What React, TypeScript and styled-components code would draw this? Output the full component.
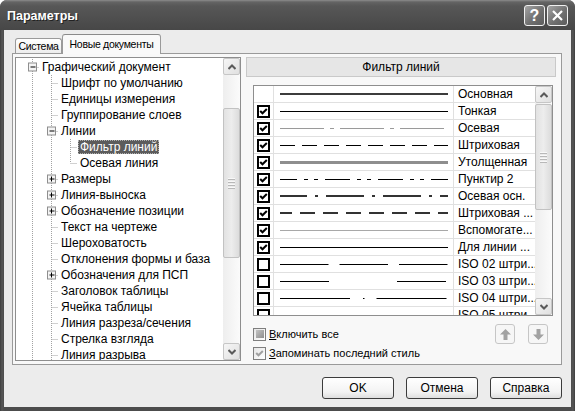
import React from 'react';
import styled, { createGlobalStyle, css } from 'styled-components';

const SANS = "'Liberation Sans', Arial, sans-serif";

const GlobalStyle = createGlobalStyle`
  html, body {
    margin: 0;
    padding: 0;
    background: #ffffff;
  }
  body {
    font-family: ${SANS};
  }
`;

const Window = styled.div`
  width: 575px;
  height: 411px;
  display: flex;
  flex-direction: column;
  background: linear-gradient(90deg, #3e3e3e 0, #575757 2px, #4c4c4c 4px, #4c4c4c 571px, #575757 573px, #3e3e3e 575px);
  border-radius: 7px 7px 0 0;
  overflow: hidden;
`;

const TitleBar = styled.div`
  height: 30px;
  flex: none;
  display: flex;
  align-items: center;
  padding: 0 7px 0 7px;
  box-sizing: border-box;
  background: linear-gradient(#8c8c8c 0, #646464 2px, #575757 6px, #4f4f4f 60%, #474747 100%);
`;

const TitleText = styled.div`
  flex: 1;
  color: #ffffff;
  font: bold 12.5px ${SANS};
  text-shadow: 1px 1px 0 #222222;
  padding-top: 1px;
`;

const CaptionButtons = styled.div`
  display: flex;
  gap: 2px;
  margin-top: 1px;
`;

const CaptionButton = styled.div`
  width: 21px;
  height: 21px;
  box-sizing: border-box;
  border: 1px solid #f0f0f0;
  border-radius: 3px;
  background: linear-gradient(135deg, #a4a4a4, #707070 55%, #5c5c5c);
  display: flex;
  align-items: center;
  justify-content: center;
  color: #ffffff;
  font: bold 16px ${SANS};
`;

const Client = styled.div`
  flex: 1;
  margin: 0 4px 4px;
  background: #ececec;
  display: flex;
  flex-direction: column;
  padding: 4px 9px 0 8px;
`;

const TabRow = styled.div`
  display: flex;
  align-items: flex-end;
  height: 19px;
  padding-left: 3px;
  position: relative;
  z-index: 1;
`;

const Tab = styled.div<{ $active?: boolean; $width: number }>`
  box-sizing: border-box;
  width: ${(p) => p.$width}px;
  height: ${(p) => (p.$active ? 20 : 15)}px;
  margin-bottom: ${(p) => (p.$active ? -1 : 0)}px;
  border: 1px solid #9a9a9a;
  border-bottom: none;
  border-radius: 3px 3px 0 0;
  background: ${(p) => (p.$active ? '#f9f9f9' : 'linear-gradient(#ffffff, #ededed)')};
  font: 10.5px ${SANS};
  letter-spacing: -0.3px;
  color: #000000;
  display: flex;
  align-items: center;
  justify-content: center;
  white-space: nowrap;
  ${(p) =>
    p.$active &&
    css`
      border-top-color: #8a8a8a;
      padding-bottom: 1px;
    `}
`;

const Panel = styled.div`
  height: 312px;
  box-sizing: border-box;
  border: 1px solid #9a9a9a;
  background: #f8f8f8;
  padding: 3px 2px;
  display: flex;
  gap: 5px;
`;

const TreeBox = styled.div`
  width: 226px;
  height: 304px;
  flex: none;
  box-sizing: border-box;
  border: 1px solid #8e8e8e;
  background: #ffffff;
  display: flex;
`;

const TreeBody = styled.div`
  flex: 1;
  overflow: hidden;
  padding-top: 1px;
`;

const TreeRow = styled.div`
  display: flex;
  align-items: center;
  height: 16px;
`;

const TreeLabel = styled.span<{ $selected?: boolean }>`
  padding: 0 2px;
  height: 14px;
  line-height: 14px;
  font: 12px ${SANS};
  color: #000000;
  white-space: nowrap;
  box-sizing: border-box;
  ${(p) =>
    p.$selected &&
    css`
      background: #5c5c5c;
      color: #ffffff;
      outline: 1px dotted #b0b0b0;
      outline-offset: -1px;
    `}
`;

const ScrollBar = styled.div`
  width: 17px;
  flex: none;
  display: flex;
  flex-direction: column;
  background: linear-gradient(90deg, #eeeeee, #fbfbfb);
`;

const ScrollButton = styled.div`
  height: 17px;
  flex: none;
  box-sizing: border-box;
  border: 1px solid #c6c6c6;
  border-radius: 2px;
  background: linear-gradient(135deg, #f6f6f6, #e0e0e0);
  display: flex;
  align-items: center;
  justify-content: center;
`;

const ScrollTrack = styled.div`
  flex: 1;
  display: flex;
  flex-direction: column;
`;

const Thumb = styled.div<{ $top: number; $size: number }>`
  margin-top: ${(p) => p.$top}px;
  height: ${(p) => p.$size}px;
  box-sizing: border-box;
  border: 1px solid #c2c2c2;
  border-radius: 2px;
  background: linear-gradient(90deg, #e2e2e2, #ededed 50%, #dcdcdc);
  display: flex;
  flex-direction: column;
  align-items: center;
  justify-content: center;
  gap: 1px;
`;

const Grip = styled.div`
  width: 7px;
  height: 1px;
  background: #f8f8f8;
  border-bottom: 1px solid #b8b8b8;
`;

const RightPane = styled.div`
  flex: 1;
  display: flex;
  flex-direction: column;
`;

const PaneHeader = styled.div`
  height: 20px;
  margin-right: 3px;
  box-sizing: border-box;
  border: 1px solid #c9c9c9;
  background: #e6e6e6;
  display: flex;
  align-items: center;
  justify-content: center;
  font: 12px ${SANS};
  color: #000000;
`;

const LineList = styled.div`
  margin: 8px 6px 0 7px;
  height: 231px;
  box-sizing: border-box;
  border: 1px solid #8e8e8e;
  background: #ffffff;
  display: flex;
`;

const ListRows = styled.div`
  flex: 1;
  overflow: hidden;
`;

const ListRow = styled.div`
  display: grid;
  grid-template-columns: 20px 180px 1fr;
  height: 17px;
  box-sizing: border-box;
  border-bottom: 1px solid #e0e0e0;
`;

const CheckCell = styled.div`
  border-right: 1px solid #e0e0e0;
  padding: 2px 0 0 3px;
`;

const LineCell = styled.div`
  border-right: 1px solid #e0e0e0;
  padding-left: 6px;
  display: flex;
  align-items: center;
`;

const NameCell = styled.div`
  padding-left: 4px;
  font: 12px ${SANS};
  line-height: 16px;
  color: #000000;
  white-space: nowrap;
  overflow: hidden;
`;

const ListCheck = styled.div`
  width: 13px;
  height: 13px;
  box-sizing: border-box;
  border: 2px solid #000000;
  background: #ffffff;
  display: flex;
  align-items: center;
  justify-content: center;
`;

const Controls = styled.div`
  display: grid;
  grid-template-columns: 1fr auto;
  row-gap: 2px;
  padding: 8px 11px 0 7px;
  align-items: center;
`;

const OptionRow = styled.label<{ $wide?: boolean }>`
  display: flex;
  align-items: center;
  gap: 3px;
  font: 11px ${SANS};
  color: #000000;
  height: 14px;
  ${(p) =>
    p.$wide &&
    css`
      grid-column: 1 / -1;
    `}
`;

const SmallBox = styled.span`
  width: 13px;
  height: 13px;
  box-sizing: border-box;
  border: 1px solid #7e7e7e;
  background: linear-gradient(135deg, #e6e6e6, #ffffff);
  display: flex;
  align-items: center;
  justify-content: center;
`;

const MixedMark = styled.span`
  width: 8px;
  height: 8px;
  background: linear-gradient(135deg, #c4c4c4, #8e8e8e);
`;

const ArrowButtons = styled.div`
  display: flex;
  gap: 13px;
`;

const ArrowButton = styled.div`
  width: 20px;
  height: 20px;
  box-sizing: border-box;
  border: 1px solid #c6c6c6;
  border-radius: 3px;
  background: #f6f6f6;
  display: flex;
  align-items: center;
  justify-content: center;
`;

const Footer = styled.div`
  display: flex;
  justify-content: flex-end;
  gap: 12px;
  margin-top: 12px;
`;

const DialogButton = styled.button`
  width: 72px;
  height: 22px;
  padding: 0;
  box-sizing: border-box;
  border: 1px solid #3c3c3c;
  border-radius: 3px;
  background: linear-gradient(#ffffff, #f3f3f3 70%, #dedede);
  font: 12px ${SANS};
  color: #000000;
`;

type TreeNode = {
  label: string;
  level: number;
  toggle?: '+' | '-';
  last?: boolean;
  selected?: boolean;
};

const treeNodes: TreeNode[] = [
  { label: 'Графический документ', level: 0, toggle: '-' },
  { label: 'Шрифт по умолчанию', level: 1 },
  { label: 'Единицы измерения', level: 1 },
  { label: 'Группирование слоев', level: 1 },
  { label: 'Линии', level: 1, toggle: '-' },
  { label: 'Фильтр линий', level: 2, selected: true },
  { label: 'Осевая линия', level: 2, last: true },
  { label: 'Размеры', level: 1, toggle: '+' },
  { label: 'Линия-выноска', level: 1, toggle: '+' },
  { label: 'Обозначение позиции', level: 1, toggle: '+' },
  { label: 'Текст на чертеже', level: 1 },
  { label: 'Шероховатость', level: 1 },
  { label: 'Отклонения формы и база', level: 1 },
  { label: 'Обозначения для ПСП', level: 1, toggle: '+' },
  { label: 'Заголовок таблицы', level: 1 },
  { label: 'Ячейка таблицы', level: 1 },
  { label: 'Линия разреза/сечения', level: 1 },
  { label: 'Стрелка взгляда', level: 1 },
  { label: 'Линия разрыва', level: 1 },
];

type LineStyle = {
  name: string;
  check: boolean | null;
  width: number;
  color: string;
  dash?: string;
  offset?: number;
};

const lineStyles: LineStyle[] = [
  { name: 'Основная', check: null, width: 2, color: '#3c3c3c' },
  { name: 'Тонкая', check: true, width: 1, color: '#000000' },
  { name: 'Осевая', check: true, width: 1, color: '#9a9a9a', dash: '44 6 4 6' },
  { name: 'Штриховая', check: true, width: 1, color: '#000000', dash: '15 7' },
  { name: 'Утолщенная', check: true, width: 3, color: '#8e8e8e' },
  { name: 'Пунктир 2', check: true, width: 1, color: '#000000', dash: '25 7 4 6 4 7', offset: 8 },
  { name: 'Осевая осн.', check: true, width: 2, color: '#333333', dash: '38 8 3 8', offset: 11 },
  { name: 'Штриховая ...', check: true, width: 2, color: '#333333', dash: '15 8', offset: 3 },
  { name: 'Вспомогате...', check: true, width: 1, color: '#a8a8a8' },
  { name: 'Для линии ...', check: true, width: 1, color: '#000000' },
  { name: 'ISO 02 штри...', check: false, width: 1, color: '#000000', dash: '48.5 11' },
  { name: 'ISO 03 штри...', check: false, width: 1, color: '#000000', dash: '49 68' },
  { name: 'ISO 04 штри...', check: false, width: 1, color: '#000000', dash: '70 13 1.5 12' },
  { name: 'ISO 05 штри...', check: false, width: 1, color: '#000000', dash: '70 10 1.5 5 1.5 10' },
];

const Chevron: React.FC<{ down?: boolean }> = ({ down }) => (
  <svg width="8" height="6" viewBox="0 0 8 6">
    <polyline
      points={down ? '0.5,1 4,4.5 7.5,1' : '0.5,5 4,1.5 7.5,5'}
      fill="none"
      stroke="#5a5a5a"
      strokeWidth="2"
    />
  </svg>
);

const VScroll: React.FC<{ top: number; size: number }> = ({ top, size }) => (
  <ScrollBar>
    <ScrollButton>
      <Chevron />
    </ScrollButton>
    <ScrollTrack>
      <Thumb $top={top} $size={size}>
        <Grip />
        <Grip />
        <Grip />
        <Grip />
      </Thumb>
    </ScrollTrack>
    <ScrollButton>
      <Chevron down />
    </ScrollButton>
  </ScrollBar>
);

const TreeGuides: React.FC<{ node: TreeNode }> = ({ node }) => {
  const width = 24 + 19 * node.level;
  const colX = (c: number) => 16 + 19 * c + 0.5;
  const own = colX(node.level);
  const ancestors = Array.from({ length: node.level }, (_, i) => i);
  return (
    <svg width={width} height="16" style={{ flex: 'none' }}>
      <g stroke="#a2a2a2" strokeWidth="1" strokeDasharray="1 1" fill="none">
        {ancestors.map((c) => (
          <line key={c} x1={colX(c)} y1="0" x2={colX(c)} y2="16" />
        ))}
        <line x1={own} y1="0" x2={own} y2={node.last ? 8 : 16} />
        <line x1={own} y1="8.5" x2={width - 1} y2="8.5" />
      </g>
      {node.toggle && (
        <g>
          <rect x={own - 4} y="4" width="8" height="8" fill="#f4f4f4" stroke="#8e8e8e" />
          <line x1={own - 2} y1="8" x2={own + 3} y2="8" stroke="#000" />
          {node.toggle === '+' && <line x1={own} y1="5.5" x2={own} y2="10.5" stroke="#000" />}
        </g>
      )}
    </svg>
  );
};

const LinePreview: React.FC<{ style: LineStyle }> = ({ style }) => {
  const y = style.width === 2 ? 8 : 8.5;
  return (
    <svg width="168" height="16">
      <line
        x1="0"
        y1={y}
        x2="168"
        y2={y}
        stroke={style.color}
        strokeWidth={style.width}
        strokeDasharray={style.dash}
        strokeDashoffset={style.offset}
      />
    </svg>
  );
};

const CheckMark: React.FC<{ color?: string }> = ({ color = '#000000' }) => (
  <svg width="9" height="9" viewBox="0 0 9 9">
    <polyline points="1.2,4 3.5,6.3 7.8,2" fill="none" stroke={color} strokeWidth="2" />
  </svg>
);

const BlockArrow: React.FC<{ down?: boolean }> = ({ down }) => (
  <svg width="11" height="11" viewBox="0 0 11 11">
    <path
      d="M5.5 0 L11 5.5 L7.5 5.5 L7.5 11 L3.5 11 L3.5 5.5 L0 5.5 Z"
      fill="#a2a2a2"
      transform={down ? 'rotate(180 5.5 5.5)' : undefined}
    />
  </svg>
);

const App: React.FC = () => {
  return (
    <>
      <GlobalStyle />
      <Window>
        <TitleBar>
          <TitleText>Параметры</TitleText>
          <CaptionButtons>
            <CaptionButton>?</CaptionButton>
            <CaptionButton>
              <svg width="11" height="11" viewBox="0 0 11 11">
                <path d="M1 1 L10 10 M10 1 L1 10" stroke="#fff" strokeWidth="2.2" />
              </svg>
            </CaptionButton>
          </CaptionButtons>
        </TitleBar>

        <Client>
          <TabRow>
            <Tab $width={47}>Система</Tab>
            <Tab $active $width={99}>
              Новые документы
            </Tab>
          </TabRow>

          <Panel>
            {/* Tree of settings */}
            <TreeBox>
              <TreeBody>
                {treeNodes.map((node) => (
                  <TreeRow key={node.label}>
                    <TreeGuides node={node} />
                    <TreeLabel $selected={node.selected}>{node.label}</TreeLabel>
                  </TreeRow>
                ))}
              </TreeBody>
              <VScroll top={33} size={150} />
            </TreeBox>

            {/* Line filter page */}
            <RightPane>
              <PaneHeader>Фильтр линий</PaneHeader>
              <LineList>
                <ListRows>
                  {lineStyles.map((ls) => (
                    <ListRow key={ls.name}>
                      <CheckCell>
                        {ls.check !== null && (
                          <ListCheck>{ls.check && <CheckMark />}</ListCheck>
                        )}
                      </CheckCell>
                      <LineCell>
                        <LinePreview style={ls} />
                      </LineCell>
                      <NameCell>{ls.name}</NameCell>
                    </ListRow>
                  ))}
                </ListRows>
                <VScroll top={1} size={106} />
              </LineList>

              <Controls>
                <OptionRow>
                  <SmallBox>
                    <MixedMark />
                  </SmallBox>
                  <span>
                    <u>В</u>ключить все
                  </span>
                </OptionRow>
                <ArrowButtons>
                  <ArrowButton>
                    <BlockArrow />
                  </ArrowButton>
                  <ArrowButton>
                    <BlockArrow down />
                  </ArrowButton>
                </ArrowButtons>
                <OptionRow $wide>
                  <SmallBox>
                    <CheckMark color="#a0a0a0" />
                  </SmallBox>
                  <span>
                    <u>З</u>апоминать последний стиль
                  </span>
                </OptionRow>
              </Controls>
            </RightPane>
          </Panel>

          <Footer>
            <DialogButton>OK</DialogButton>
            <DialogButton>Отмена</DialogButton>
            <DialogButton>Справка</DialogButton>
          </Footer>
        </Client>
      </Window>
    </>
  );
};

export default App;
